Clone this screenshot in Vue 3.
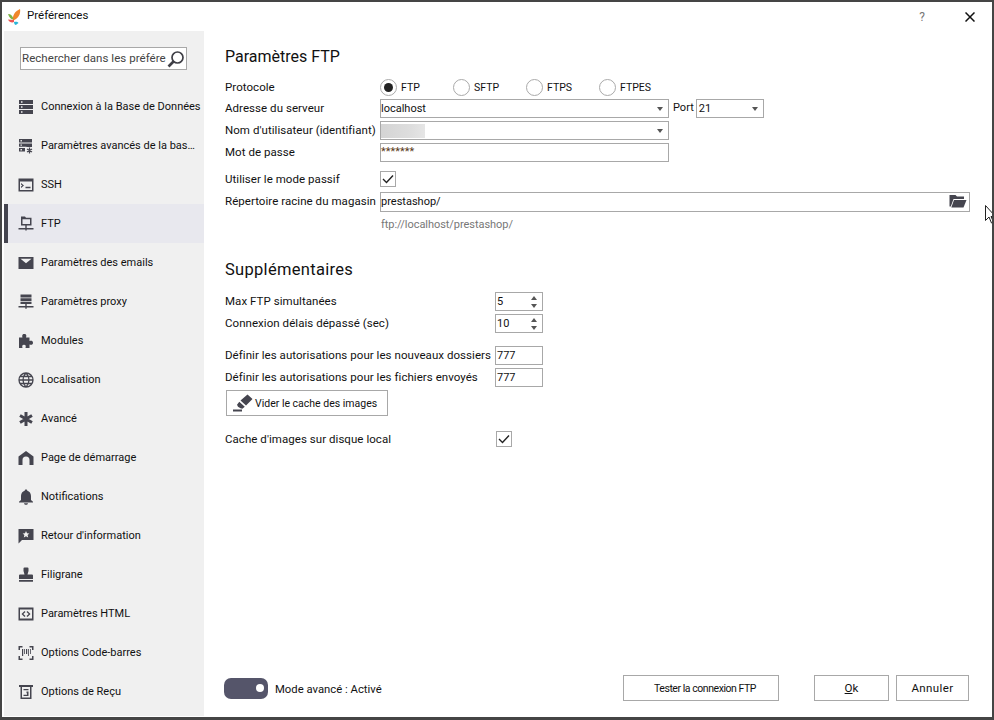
<script setup>
const navItems = [
  { label: 'Connexion à la Base de Données', d: 'M1 1h14v4H1zM3 2.300v1.400h1.500V2.300zM1 6h14v4H1zM3 7.300v1.400h1.500V7.300zM1 11h14v4H1zM3 12.300v1.400h1.500v-1.400z' },
  { label: 'Paramètres avancés de la bas…', d: 'M1 1h13v3.500H1zM2.500 2v1.400h1.400V2zM1 5.500h13V9H8.500v-.200H1zM2.500 6.500v1.300h1.400V6.500zM1 10h6v3.500H1zM2.500 11v1.400h1.400V11z', s: 'M11.500 9.500v6M9 11l5 3M14 11l-5 3' },
  { label: 'SSH', d: 'M0.500 1.500h15v13h-15zM2 4.500v8.500h12V4.500zM3 6l3 2.500-3 2.500v-1.500l1.300-1-1.300-1zM7.500 9.800h5v1.500h-5z' },
  { label: 'FTP', active: true, d: 'M3 0.500h4l1 1.300h5.500v7.700H3zM4.500 3.200v4.800h7.500V3.200zM7.300 9.500h1.400V12h6.800v1.500H8.700v1H7.300v-1H.5V12h6.800z' },
  { label: 'Paramètres des emails', d: 'M0.500 2h15v12h-15zM2.500 3.800h11L8 8.300z' },
  { label: 'Paramètres proxy', d: 'M2.500 0.500h11v3h-11zM2.500 4.200h11v3h-11zM2.500 7.900h11v2h-11zM7.300 9.900h1.400V12h6.800v1.500H8.700v1.300H7.300v-1.300H.5V12h6.800z' },
  { label: 'Modules', d: 'M1 4.500h3.500C4 3 4 1 6.300 1s2.300 2 1.700 3.500h3.500V8c1.500-.6 3.500-.6 3.500 1.800S13 12 11.500 11.500V15H7.500c.5-1.500.5-3.200-1.500-3.200S4 13.500 4.500 15H1z' },
  { label: 'Localisation', s2: 'M8 1a7 7 0 1 0 0 14A7 7 0 0 0 8 1zM1 8h14M2 4.500h12M2 11.500h12M8 1c-4 4-4 10 0 14M8 1c4 4 4 10 0 14' },
  { label: 'Avancé', s3: 'M8 1v14M2 4.500l12 7M14 4.500l-12 7' },
  { label: 'Page de démarrage', d: 'M8 1l7.500 5.500V15H11.500V10a3.500 3.500 0 0 0-7 0v5H0.500V6.500z' },
  { label: 'Notifications', d: 'M8 0.500c.8 0 1.300.5 1.300 1.200C11.500 2.300 13 4.200 13 7v4l2 1.700V13.500H1v-.8L3 11V7c0-2.800 1.500-4.700 3.700-5.300C6.700 1 7.200 .5 8 .5zM6 14.300h4C9.800 15.300 9 15.800 8 15.800s-1.800-.5-2-1.500z' },
  { label: 'Retour d\'information', d: 'M0.500 1h15v11H4l-3.500 3.500zM8 3l-1 2.300-2.400.2 1.800 1.600-.6 2.400L8 8.300l2.200 1.200-.6-2.400 1.800-1.600L9 5.300z' },
  { label: 'Filigrane', d: 'M6.500 0.500h3a1 1 0 0 1 1 1v2.500L9.500 7.500H14a1 1 0 0 1 1 1v3.500H1V8.500a1 1 0 0 1 1-1h4.500l-1-3.500V1.500a1 1 0 0 1 1-1zM1 13h14v1.800H1z' },
  { label: 'Paramètres HTML', d: 'M0.500 1.500h15v13h-15zM2 3.500v9h12v-9zM6.500 5l1 .9L5.300 8l2.200 2.100-1 .9-3-3zM9.500 5l3 3-3 3-1-.9L10.700 8 8.500 5.900z' },
  { label: 'Options Code-barres', d: 'M0.500 1h4v1.500H2V5H0.500zM11.500 1h4v4H14V2.500h-2.500zM0.500 11H2v2.500h2.500V15h-4zM14 11h1.500v4h-4v-1.500H14zM4 4h1.200v7H4zM6.200 4h.8v5h-.8zM8 4h1.200v5H8zM10.200 4h.8v7h-.8zM12 4h.8v5H12z' },
  { label: 'Options de Reçu', d: 'M1 1h14v2h-1.500v12h-11V3H1zM4 3v10.500h8V3zM5.500 5h5v1.300h-5zM8.500 7.500h2v4.500h-5v-1.300h3.500V9.300H8.500z' },
]
const protocols = ['FTP', 'SFTP', 'FTPS', 'FTPES']
</script>

<template>
  <div class="window">
    <header class="titlebar">
      <svg class="logo" viewBox="0 0 13 16" width="13" height="16">
        <path d="M12 0C13 5 10 10 5 11.500 4 7 7 2 12 0z" fill="#f0862a" />
        <path d="M0 5C3 5 5 7 5.500 10.500 3 10.500 1 8.500 0 5z" fill="#7cb342" />
        <path d="M0 10.500L6 11v2C4 14 1 13 0 10.500z" fill="#ef5350" />
        <path d="M6 13c2-.5 4 0 4.500 1C9 15 8 16 7.500 16 6.500 15.500 6 14 6 13z" fill="#29b6d8" />
      </svg>
      <span class="title">Préférences</span>
      <span class="help">?</span>
      <svg class="close" viewBox="0 0 10 10" width="10" height="10">
        <path d="M0.500 0.500l9 9M9.500 0.500l-9 9" stroke="#111" stroke-width="1.500" fill="none" />
      </svg>
    </header>

    <div class="body">
      <aside class="sidebar">
        <div class="search">
          <span class="search-text">Rechercher dans les préfére</span>
          <svg viewBox="0 0 18 18" width="18" height="18">
            <circle cx="10.500" cy="7.500" r="5.500" fill="none" stroke="#3f3f46" stroke-width="1.700" />
            <path d="M6.500 11.500L1.500 16.500" stroke="#3f3f46" stroke-width="2.600" />
          </svg>
        </div>
        <nav class="nav">
          <div v-for="item in navItems" :key="item.label" class="nav-item" :class="{ active: item.active }">
            <svg class="nav-icon" viewBox="0 0 16 16" width="16" height="16">
              <path v-if="item.d" :d="item.d" fill="#45454f" fill-rule="evenodd" />
              <path v-if="item.s" :d="item.s" stroke="#45454f" stroke-width="1.300" fill="none" />
              <path v-if="item.s2" :d="item.s2" stroke="#45454f" stroke-width="1.300" fill="none" />
              <path v-if="item.s3" :d="item.s3" stroke="#45454f" stroke-width="3" fill="none" />
            </svg>
            <span>{{ item.label }}</span>
          </div>
        </nav>
      </aside>

      <main class="main">
        <h2 class="heading">Paramètres FTP</h2>

        <div class="row protocol-row">
          <label class="label">Protocole</label>
          <div class="radios">
            <span v-for="(p, i) in protocols" :key="p" class="radio-item">
              <span class="radio" :class="{ on: i === 0 }"></span>{{ p }}
            </span>
          </div>
        </div>
        <div class="row gap3">
          <label class="label">Adresse du serveur</label>
          <div class="field wide">localhost<span class="caret"></span></div>
          <span class="port-label">Port</span>
          <div class="field port">21<span class="caret"></span></div>
        </div>
        <div class="row gap3">
          <label class="label">Nom d'utilisateur (identifiant)</label>
          <div class="field wide"><span class="blurred"></span><span class="caret"></span></div>
        </div>
        <div class="row gap3">
          <label class="label">Mot de passe</label>
          <div class="field wide password">*******</div>
        </div>
        <div class="row passive-row">
          <label class="label">Utiliser le mode passif</label>
          <span class="check flush">
            <svg viewBox="0 0 12 10" width="12" height="10"><path d="M1 5l3.500 3.500L11 1.500" fill="none" stroke="#222" stroke-width="1.400" /></svg>
          </span>
        </div>
        <div class="row root-row">
          <label class="label">Répertoire racine du magasin</label>
          <div class="field root">
            prestashop/
            <svg class="folder" viewBox="0 0 18 14" width="18" height="14">
              <path d="M0.500 1h6l1.500 1.500h7V5H4.500L1.800 12.500H0.500z" fill="#45454f" />
              <path d="M5 6h12.500l-3 7.500H2.300z" fill="#45454f" />
            </svg>
          </div>
        </div>
        <div class="hint">ftp://localhost/prestashop/</div>

        <h2 class="heading second">Supplémentaires</h2>

        <div class="row sup-first">
          <label class="label long">Max FTP simultanées</label>
          <div class="field spin">5<span class="arrows"><i class="up"></i><i class="down"></i></span></div>
        </div>
        <div class="row gap3">
          <label class="label long">Connexion délais dépassé (sec)</label>
          <div class="field spin">10<span class="arrows"><i class="up"></i><i class="down"></i></span></div>
        </div>
        <div class="row perm-first">
          <label class="label long">Définir les autorisations pour les nouveaux dossiers</label>
          <div class="field spin">777</div>
        </div>
        <div class="row gap3">
          <label class="label long">Définir les autorisations pour les fichiers envoyés</label>
          <div class="field spin">777</div>
        </div>
        <button class="btn clear-btn">
          <svg viewBox="0 0 20 18" width="20" height="18">
            <path d="M7.500 6.500L14.500 0.500l5 4.500-6.500 6.500zM6.300 7.800l5.500 5-2.500 2-1.800-.5-2.500-1.500-1-2z" fill="#45454f" />
            <path d="M0 15.500h9V17.500H0z" fill="#45454f" />
          </svg>
          Vider le cache des images
        </button>
        <div class="row cache-row">
          <label class="label long">Cache d'images sur disque local</label>
          <span class="check">
            <svg viewBox="0 0 12 10" width="12" height="10"><path d="M1 5l3.500 3.500L11 1.500" fill="none" stroke="#222" stroke-width="1.400" /></svg>
          </span>
        </div>

        <footer class="footer">
          <span class="toggle"><span class="knob"></span></span>
          <span class="toggle-label">Mode avancé : Activé</span>
          <button class="btn test-btn">Tester la connexion FTP</button>
          <button class="btn ok-btn"><u>O</u>k</button>
          <button class="btn cancel-btn">Annuler</button>
        </footer>
      </main>
    </div>

    <svg class="cursor" viewBox="0 0 10 20" width="10" height="20">
      <path d="M0.500 0.500v15l3.500-3.500 2.500 6 2-1-2.500-5.500h4.500z" fill="#fff" stroke="#222" stroke-width="1" />
    </svg>
  </div>
</template>

<style>
body { background: #fff; }
</style>

<style scoped>
.window {
  position: relative;
  width: 994px;
  height: 720px;
  box-sizing: border-box;
  border: 2px solid #454545;
  border-bottom-width: 3px;
  background: #fff;
  display: flex;
  flex-direction: column;
  font-family: Roboto, "Noto Sans", sans-serif;
  font-size: 11.500px;
  color: #111;
  overflow: hidden;
}

.titlebar {
  height: 29px;
  flex: none;
  display: flex;
  align-items: center;
  padding-left: 6px;
}
.logo { margin-right: 6px; }
.title { font-size: 11.500px; margin-top: -4px; }
.help { margin-left: auto; color: #777; font-size: 12px; margin-right: 40px; }
.close { margin-right: 17px; }

.body {
  flex: 1;
  display: flex;
  min-height: 0;
  padding: 0 0 1px 2px;
}

.sidebar {
  width: 200px;
  flex: none;
  background: #f0f0f0;
  padding-top: 16px;
  box-sizing: border-box;
}
.search {
  width: 167px;
  height: 23px;
  margin-left: 16px;
  box-sizing: border-box;
  background: #fff;
  border: 1px solid #a8a8a8;
  display: flex;
  align-items: center;
  justify-content: space-between;
  padding: 0 1px;
}
.search-text { color: #444; white-space: nowrap; overflow: hidden; letter-spacing: 0.050px; margin-bottom: 2px; }
.nav { margin-top: 17px; }
.nav-item {
  height: 39px;
  display: flex;
  align-items: center;
  gap: 7px;
  border-left: 4px solid transparent;
  padding-left: 10px;
  white-space: nowrap;
  font-size: 11px;
}
.nav-item.active {
  background: #e8e8ee;
  border-left-color: #45454f;
}
.nav-icon { flex: none; }

.main {
  flex: 1;
  display: flex;
  flex-direction: column;
  padding: 14px 0 15px 21px;
  min-width: 0;
}
.heading {
  margin: 0;
  font-size: 16px;
  font-weight: 400;
  line-height: 24px;
}
.heading.second { margin-top: 25px; font-size: 16.500px; letter-spacing: 0.300px; }

.row { display: flex; align-items: center; }
.gap3 { margin-top: 3px; }
.protocol-row { margin-top: 9px; height: 18px; }
.passive-row { margin-top: 9px; height: 16px; }
.root-row { margin-top: 5px; }
.sup-first { margin-top: 10px; }
.perm-first { margin-top: 13px; }
.cache-row { margin-top: 15px; height: 16px; }

.label { width: 155px; flex: none; white-space: nowrap; letter-spacing: 0.050px; }
.label.long { width: 270px; }
.gap3 .label, .root-row .label, .sup-first .label, .perm-first .label { margin-bottom: 2px; }

.radios { display: flex; }
.radio-item { display: flex; align-items: center; gap: 4px; width: 73px; font-size: 10.500px; }
.radio {
  width: 15px;
  height: 15px;
  border-radius: 50%;
  border: 1px solid #aaa;
  background: #fff;
  display: flex;
  align-items: center;
  justify-content: center;
}
.radio.on::after {
  content: "";
  width: 9px;
  height: 9px;
  border-radius: 50%;
  background: #222;
}

.field {
  height: 19px;
  box-sizing: border-box;
  border: 1px solid #a8a8a8;
  display: flex;
  align-items: center;
  background: #fff;
  font-size: 11px;
}
.wide { width: 289px; }
.port { width: 68px; padding-left: 2px; }
.port-label { margin: 0 2px 2px 4px; font-size: 11px; }
.root { width: 590px; height: 20px; padding-bottom: 2px; }
.spin { width: 48px; padding-left: 1px; }
.password { align-items: flex-start; line-height: 13px; color: #5a3a1a; padding-top: 1px; }
.caret {
  margin-left: auto;
  margin-right: 5px;
  width: 0;
  height: 0;
  border-left: 3.500px solid transparent;
  border-right: 3.500px solid transparent;
  border-top: 4px solid #555;
}
.blurred {
  width: 44px;
  height: 14px;
  background: linear-gradient(90deg, #d4d4d4, #dedede 70%, #e6e6e6);
}
.folder { margin-left: auto; margin-right: 2px; }
.hint { color: #777; margin: 5px 0 0 156px; line-height: 16px; font-size: 11px; letter-spacing: -0.050px; }

.arrows {
  margin-left: auto;
  margin-right: 5px;
  display: flex;
  flex-direction: column;
  gap: 4px;
}
.arrows i { width: 0; height: 0; border-left: 3.500px solid transparent; border-right: 3.500px solid transparent; }
.arrows .up { border-bottom: 4px solid #555; }
.arrows .down { border-top: 4px solid #555; }

.check {
  width: 16px;
  height: 16px;
  box-sizing: border-box;
  border: 1px solid #a8a8a8;
  display: flex;
  align-items: center;
  justify-content: center;
  margin-left: 1px;
}
.check.flush { margin-left: 0; }

.btn {
  font: inherit;
  color: inherit;
  background: #fff;
  border: 1px solid #a8a8a8;
  height: 26px;
  padding: 0;
  box-sizing: border-box;
  white-space: nowrap;
}
.clear-btn {
  margin: 3px 0 0 1px;
  width: 162px;
  display: flex;
  align-items: center;
  gap: 2px;
  padding-left: 6px;
  font-size: 10.500px;
}

.footer {
  margin-top: auto;
  display: flex;
  align-items: center;
}
.toggle {
  width: 44px;
  height: 21px;
  border-radius: 7px;
  background: #55556a;
  display: flex;
  align-items: center;
  justify-content: flex-end;
  padding-right: 4px;
  box-sizing: border-box;
  margin-left: -1px;
}
.knob { width: 8px; height: 8px; border-radius: 50%; background: #fff; }
.toggle-label { margin: 2px 0 0 7px; font-size: 11.300px; }
.test-btn { margin-left: auto; width: 156px; padding-left: 8px; font-size: 10.500px; letter-spacing: -0.450px; }
.ok-btn { margin-left: 35px; width: 75px; }
.cancel-btn { margin-left: 7px; width: 73px; margin-right: 23px; letter-spacing: 0.400px; }

.cursor { position: absolute; left: 983px; top: 203px; }
</style>
